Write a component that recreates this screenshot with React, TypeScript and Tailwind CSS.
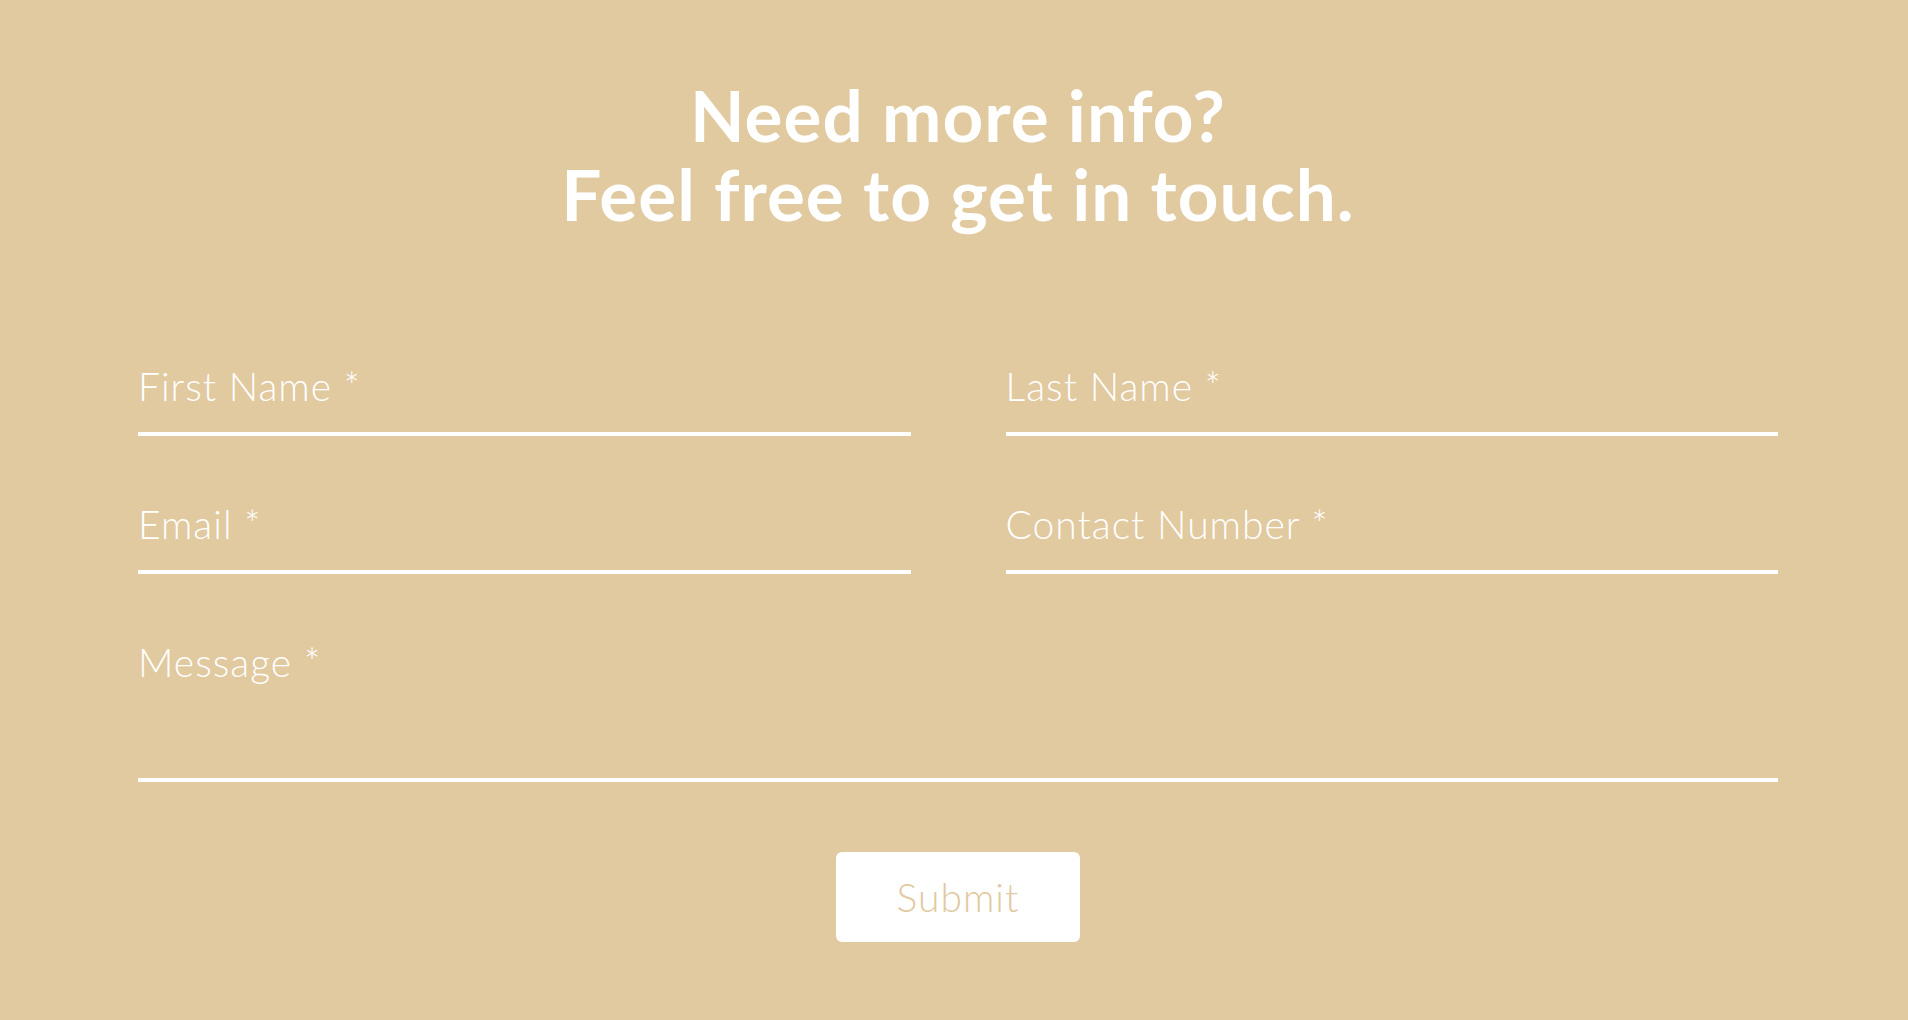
import { useState } from "react";

const fieldInput =
  "h-[47px] w-full bg-transparent p-0 text-[39px] font-light leading-[47px] tracking-[1px] text-white outline-none placeholder:text-white";

function Field({ placeholder }: { placeholder: string }) {
  const [value, setValue] = useState("");
  return (
    <div className="border-b-4 border-white pb-[22px] pt-[2px]">
      <input
        type="text"
        value={value}
        onChange={(e) => setValue(e.target.value)}
        placeholder={placeholder}
        className={fieldInput}
      />
    </div>
  );
}

export default function App() {
  const [message, setMessage] = useState("");

  return (
    <div className="min-h-screen bg-[#e1c9a0] pl-[138px] pr-[130px] pt-[75px] font-['Lato',_'Liberation_Sans',_sans-serif]">
      {/* Heading */}
      <h1 className="text-center text-[71px] font-bold leading-[79px] tracking-[1px] text-white">
        Need more info?
        <br />
        Feel free to get in touch.
      </h1>

      {/* Form */}
      <form className="mt-[128px] flex flex-col" onSubmit={(e) => e.preventDefault()}>
        <div className="grid grid-cols-2 gap-x-[95px] gap-y-[63px]">
          <Field placeholder="First Name *" />
          <Field placeholder="Last Name *" />
          <Field placeholder="Email *" />
          <Field placeholder="Contact Number *" />
          <div className="col-span-2 border-b-4 border-white pb-[22px] pt-[2px]">
            <textarea
              value={message}
              onChange={(e) => setMessage(e.target.value)}
              placeholder="Message *"
              className="block h-[117px] w-full resize-none bg-transparent p-0 text-[39px] font-light leading-[47px] tracking-[1px] text-white outline-none placeholder:text-white"
            />
          </div>
        </div>

        <button
          type="submit"
          className="mx-auto mt-[70px] flex h-[90px] w-[244px] items-center justify-center rounded-md bg-white text-[39px] font-light tracking-[1px] text-[#e1c9a0]"
        >
          Submit
        </button>
      </form>
    </div>
  );
}
